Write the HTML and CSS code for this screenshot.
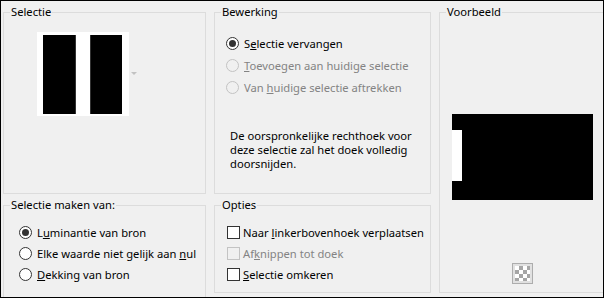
FILE: index.html
```html
<!DOCTYPE html>
<html>
	<head>
		<meta charset="UTF-8">
		<title>Selectie</title>
		<link rel="stylesheet" href="styles.css">
	</head>
	<body>
		<div class="dialog">
			<fieldset class="grp grp-sel">
				<legend>Selectie</legend>
				<div class="thumb-row">
					<div class="thumb">
						<span class="bar bar-l"></span>
						<span class="bar bar-r"></span>
					</div>
					<span class="drop"></span>
				</div>
			</fieldset>

			<fieldset class="grp grp-edit">
				<legend>Bewerking</legend>
				<div class="opts">
					<label class="row"><span class="radio on"></span><span>S<u>e</u>lectie vervangen</span></label>
					<label class="row off"><span class="radio"></span><span><u>T</u>oevoegen aan huidige selectie</span></label>
					<label class="row off"><span class="radio"></span><span>Van <u>h</u>uidige selectie aftrekken</span></label>
				</div>
				<p class="note">De oorspronkelijke rechthoek voor deze selectie zal het doek volledig doorsnijden.</p>
			</fieldset>

			<fieldset class="grp grp-view">
				<legend>Voorbeeld</legend>
				<div class="preview">
					<span class="gap"></span>
				</div>
				<button class="chk" type="button"><span></span></button>
			</fieldset>

			<fieldset class="grp grp-src">
				<legend>Selectie maken van:</legend>
				<div class="opts">
					<label class="row"><span class="radio on"></span><span>L<u>u</u>minantie van bron</span></label>
					<label class="row"><span class="radio"></span><span>Elke waarde niet gelijk aan <u>n</u>ul</span></label>
					<label class="row"><span class="radio"></span><span><u>D</u>ekking van bron</span></label>
				</div>
			</fieldset>

			<fieldset class="grp grp-opt">
				<legend>Opties</legend>
				<div class="opts">
					<label class="row"><span class="box"></span><span>Naar <u>l</u>inkerbovenhoek verplaatsen</span></label>
					<label class="row off"><span class="box"></span><span>Af<u>k</u>nippen tot doek</span></label>
					<label class="row"><span class="box"></span><span><u>S</u>electie omkeren</span></label>
				</div>
			</fieldset>
		</div>
	</body>
</html>
```

FILE: styles.css
```css
body {
	margin: 0;
	font-family: "Noto Sans", "Open Sans", sans-serif;
	font-size: 11.2px;
	color: #000;
}

.dialog {
	width: 604px;
	height: 298px;
	box-sizing: border-box;
	border: 1px solid #000;
	background-color: #f0f0f0;
	overflow: hidden;
	display: grid;
	grid-template-columns: 203px 217px 170px;
	grid-template-rows: 189px 95px;
	column-gap: 8px;
	row-gap: 4px;
	padding: 4px 0 0 2px;
}

.grp {
	margin: 0;
	padding: 0;
	min-width: 0;
	border: 1px solid #dcdcdc;
}

.grp legend {
	margin-left: 6px;
	padding: 0 1px;
	line-height: 14px;
}

.grp-sel { grid-column: 1; grid-row: 1; }
.grp-edit { grid-column: 2; grid-row: 1; }
.grp-view { grid-column: 3; grid-row: 1 / 3; }
.grp-src { grid-column: 1; grid-row: 2; margin-bottom: -8px; }
.grp-opt { grid-column: 2; grid-row: 2; }

/* miniatuur */
.thumb-row {
	display: flex;
	align-items: center;
	margin: 13px 0 0 33px;
}

.thumb {
	width: 92px;
	height: 84px;
	background-color: #fff;
	display: flex;
	align-items: center;
	padding-left: 6px;
	box-sizing: border-box;
}

.bar {
	width: 33px;
	height: 79px;
	background-color: #000;
}

.bar-l {
	border-right: 1px solid #333;
	width: 32px;
}

.bar-r {
	margin-left: 14px;
	border-left: 1px solid #333;
	width: 31px;
}

.drop {
	margin: 0 0 2px 2px;
	border-style: solid;
	border-width: 3px 3px 0;
	border-color: #c2c2c2 transparent transparent;
}

/* keuzes */
.opts {
	display: flex;
	flex-direction: column;
}

.row {
	display: flex;
	align-items: center;
	height: 22px;
	white-space: nowrap;
}

.row.off {
	color: #838383;
}

.radio,
.box {
	width: 13px;
	height: 13px;
	box-sizing: border-box;
	border: 1px solid #333;
	background-color: #fff;
	margin-right: 5px;
	flex: none;
}

.radio {
	border-radius: 50%;
	position: relative;
}

.radio.on::after {
	content: '';
	position: absolute;
	left: 2px;
	top: 2px;
	width: 7px;
	height: 7px;
	border-radius: 50%;
	background-color: #333;
}

.off .radio,
.off .box {
	border-color: #c3c3c3;
	background-color: #f0f0f0;
}

.box {
	margin-right: 3px;
}

.grp-edit .opts {
	margin: 13px 0 0 11px;
}

.note {
	margin: 31px 0 0 15px;
	line-height: 14px;
	width: 195px;
}

.grp-src .opts {
	margin: 10px 0 0 15px;
}

.grp-src .row {
	height: 21px;
}

.grp-opt .opts {
	margin: 10px 0 0 12px;
}

.grp-opt .row {
	height: 21px;
}

/* voorbeeld */
.grp-view {
	display: flex;
	flex-direction: column;
}

.preview {
	width: 141px;
	height: 86px;
	background-color: #000;
	margin: 95px 0 0 12px;
	display: flex;
	align-items: center;
}

.preview .gap {
	width: 10px;
	height: 51px;
	background-color: #fff;
	margin-top: -4px;
}

.chk {
	width: 21px;
	height: 21px;
	margin: 63px 0 0 72px;
	padding: 2px;
	border: 1px solid #adadad;
	background-color: #e1e1e1;
	box-sizing: border-box;
}

.chk span {
	display: block;
	width: 15px;
	height: 15px;
	background-color: #fff;
	background-image:
		linear-gradient(45deg, #a6a6a6 25%, transparent 25%, transparent 75%, #a6a6a6 75%),
		linear-gradient(45deg, #a6a6a6 25%, transparent 25%, transparent 75%, #a6a6a6 75%);
	background-size: 8px 8px;
	background-position: 0 0, 4px 4px;
}
```
